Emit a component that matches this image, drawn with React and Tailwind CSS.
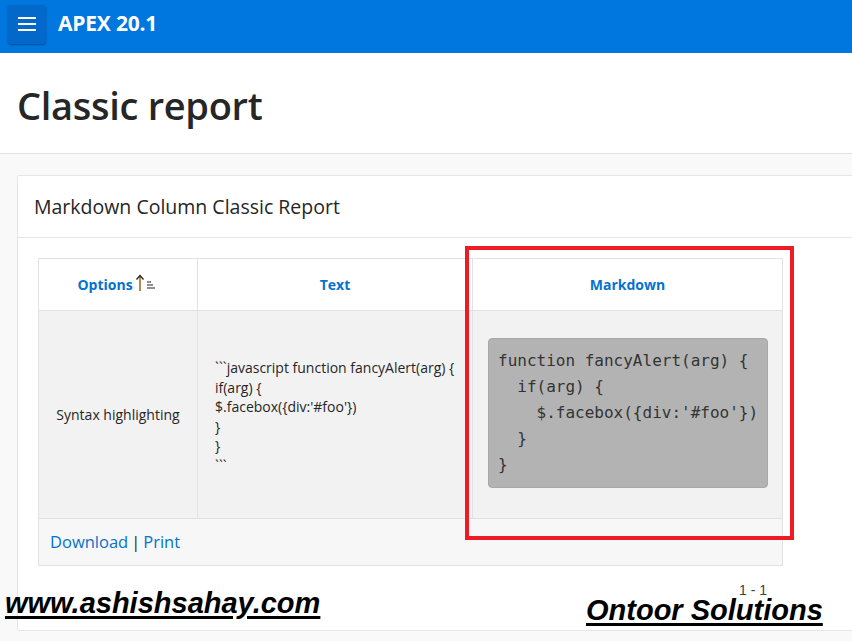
import React from "react";

const code = `function fancyAlert(arg) {
  if(arg) {
    $.facebox({div:'#foo'})
  }
}`;

const Hamburger = () => (
  <svg width="20" height="16" viewBox="0 0 20 16" fill="none">
    <rect x="1" y="1" width="18" height="2" fill="white" />
    <rect x="1" y="7" width="18" height="2" fill="white" />
    <rect x="1" y="13" width="18" height="2" fill="white" />
  </svg>
);

const SortIcon = () => (
  <svg width="24" height="18" viewBox="0 0 24 18" className="inline-block ml-[2px] -mt-[3px]">
    <path d="M5 17V2" stroke="#e39a1c" strokeWidth="1.4" />
    <path d="M1.5 5.5L5 1.5L8.5 5.5" stroke="#222" strokeWidth="1.3" fill="none" />
    <path d="M5 3V17" stroke="#222" strokeWidth="0.6" />
    <path d="M12 8h4M12 11h6M12 14h8" stroke="#222" strokeWidth="1.2" />
  </svg>
);

export default function App() {
  return (
    <div className="relative w-[852px] h-[641px] overflow-hidden bg-[#f9f9f9] font-['Open_Sans','Noto_Sans',sans-serif] text-[#262626]">
      {/* Header */}
      <div className="h-[53px] bg-[#0076df] flex items-center pl-[8px]">
        <button className="w-[38px] h-[39px] -mt-[5px] rounded-[3px] bg-[#0268c9] shadow-[0_1px_2px_rgba(0,0,0,0.35)] flex items-center justify-center">
          <Hamburger />
        </button>
        <span className="ml-[12px] -mt-[6px] text-white text-[21px] font-bold tracking-[-0.2px]">APEX 20.1</span>
      </div>

      {/* Title */}
      <div className="h-[101px] bg-white border-b border-[#e2e2e2] pl-[17px] pt-[28px]">
        <h1 className="text-[38px] leading-[48px] font-semibold text-[#262626] tracking-[-0.3px]">Classic report</h1>
      </div>

      {/* Region */}
      <div className="pl-[17px] pt-[21px]">
        <div className="w-[860px] bg-white border border-[#e6e6e6] rounded-[2px]">
          <div className="h-[62px] border-b border-[#e6e6e6] flex items-center pl-[16px]">
            <h2 className="text-[19.5px] text-[#262626]">Markdown Column Classic Report</h2>
          </div>
          <div className="pl-[20px] pt-[20px] pb-[31px]">
            <div className="w-[745px] border border-[#e2e2e2]">
              <div className="flex h-[52px] bg-white border-b border-[#e2e2e2] text-[14px] font-bold text-[#0572ce]">
                <div className="w-[159px] border-r border-[#e2e2e2] flex items-center justify-center">
                  <span>Options</span>
                  <SortIcon />
                </div>
                <div className="w-[275px] border-r border-[#e2e2e2] flex items-center justify-center">Text</div>
                <div className="flex-1 flex items-center justify-center">Markdown</div>
              </div>
              <div className="flex h-[208px] bg-[#f2f2f2] border-b border-[#e2e2e2] text-[14px] text-[#262626]">
                <div className="w-[159px] border-r border-[#e2e2e2] flex items-center justify-center">Syntax highlighting</div>
                <div className="w-[275px] border-r border-[#e2e2e2] flex items-center pl-[17px] pt-[4px]">
                  <div className="leading-[19.5px] text-[14px]">
                    <div>```javascript function fancyAlert(arg) {"{"}</div>
                    <div>if(arg) {"{"}</div>
                    <div>$.facebox({"{"}div:'#foo'{"}"})</div>
                    <div>{"}"}</div>
                    <div>{"}"}</div>
                    <div>```</div>
                  </div>
                </div>
                <div className="flex-1 pl-[15px] pt-[27px]">
                  <pre className="w-[280px] h-[150px] bg-[#b3b3b3] border border-[#a8a8a8] rounded-[4px] pl-[9px] pt-[9px] font-['DejaVu_Sans_Mono',monospace] text-[16px] leading-[26px] text-[#333]">{code}</pre>
                </div>
              </div>
              <div className="h-[46px] bg-[#f7f7f7] flex items-center pl-[11px] text-[16.5px] text-[#0572ce]">
                <span>Download</span>
                <span className="mx-[3px] text-[#262626]">|</span>
                <span>Print</span>
              </div>
            </div>
            <div className="w-[745px] text-right pr-[16px] pt-[15px] text-[14px] leading-[18px] text-[#404040] font-['Liberation_Sans',sans-serif]">1 - 1</div>
          </div>
        </div>
      </div>

      {/* Red highlight */}
      <div className="absolute left-[465px] top-[246px] w-[329px] h-[294px] border-[4px] border-[#ed1c24]" />

      {/* Watermarks */}
      <div className="absolute left-[5px] top-[585px] font-['Liberation_Sans_Narrow','Liberation_Sans',sans-serif] text-[29px] font-bold italic underline decoration-[3px] underline-offset-[3px] text-black leading-[36px]">www.ashishsahay.com</div>
      <div className="absolute left-[586px] top-[597px] font-['Liberation_Sans',sans-serif] text-[29px] font-bold italic underline decoration-[3px] underline-offset-[3px] text-black leading-[27px]">Ontoor Solutions</div>
    </div>
  );
}
